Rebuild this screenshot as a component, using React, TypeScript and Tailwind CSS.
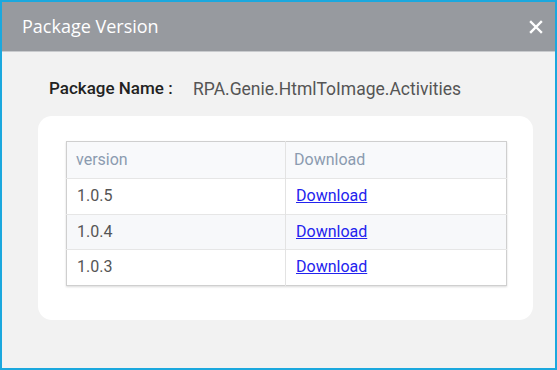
import React from "react";

const versions = ["1.0.5", "1.0.4", "1.0.3"];

export default function App() {
  return (
    <div className="w-[557px] h-[370px] border-2 border-[#1ba8de] bg-[#f2f2f2] flex flex-col font-['Roboto',sans-serif]">
      {/* Header */}
      <div className="h-[50px] bg-[#979a9f] border-b border-[#c9cbce] flex items-center justify-between pl-[20px] pr-[12px] shrink-0">
        <span className="text-white text-[18px] font-['Open_Sans',sans-serif]">Package Version</span>
        <button className="text-white">
          <svg width="14" height="14" viewBox="0 0 14 14">
            <path d="M2 2 L12 12 M12 2 L2 12" stroke="white" strokeWidth="2.4" strokeLinecap="square" />
          </svg>
        </button>
      </div>

      {/* Body */}
      <div className="flex-1 pl-[36px] pr-[22px] pt-[24px]">
        <div className="flex items-center h-[26px] pl-[11px]">
          <span className="text-[#222] font-medium text-[17px] w-[144px]">Package Name :</span>
          <span className="text-[#555] text-[17.5px]">RPA.Genie.HtmlToImage.Activities</span>
        </div>

        <div className="mt-[14px] bg-white rounded-[14px] h-[204px] pl-[28px] pr-[26px] pt-[25px]">
          <table className="w-full border border-[#cfcfcf] shadow-[0_1px_2px_rgba(0,0,0,0.15)] border-collapse text-[16px]">
            <thead>
              <tr className="bg-[#f8f9fb] h-[37px]">
                <th className="text-left font-normal text-[#8b9bb0] px-[9px] w-[219px] border-r border-[#e3e3e3]">version</th>
                <th className="text-left font-normal text-[#8b9bb0] px-[8px]">Download</th>
              </tr>
            </thead>
            <tbody>
              {versions.map((v, i) => (
                <tr key={v} className={`h-[35.5px] border-t border-[#e6e6e6] ${i === 1 ? "bg-[#f7f8fa]" : "bg-white"}`}>
                  <td className="px-[10px] text-[#555] border-r border-[#e3e3e3]">{v}</td>
                  <td className="px-[10px]">
                    <a href="#" className="text-[#2323ee] underline">Download</a>
                  </td>
                </tr>
              ))}
            </tbody>
          </table>
        </div>
      </div>
    </div>
  );
}
